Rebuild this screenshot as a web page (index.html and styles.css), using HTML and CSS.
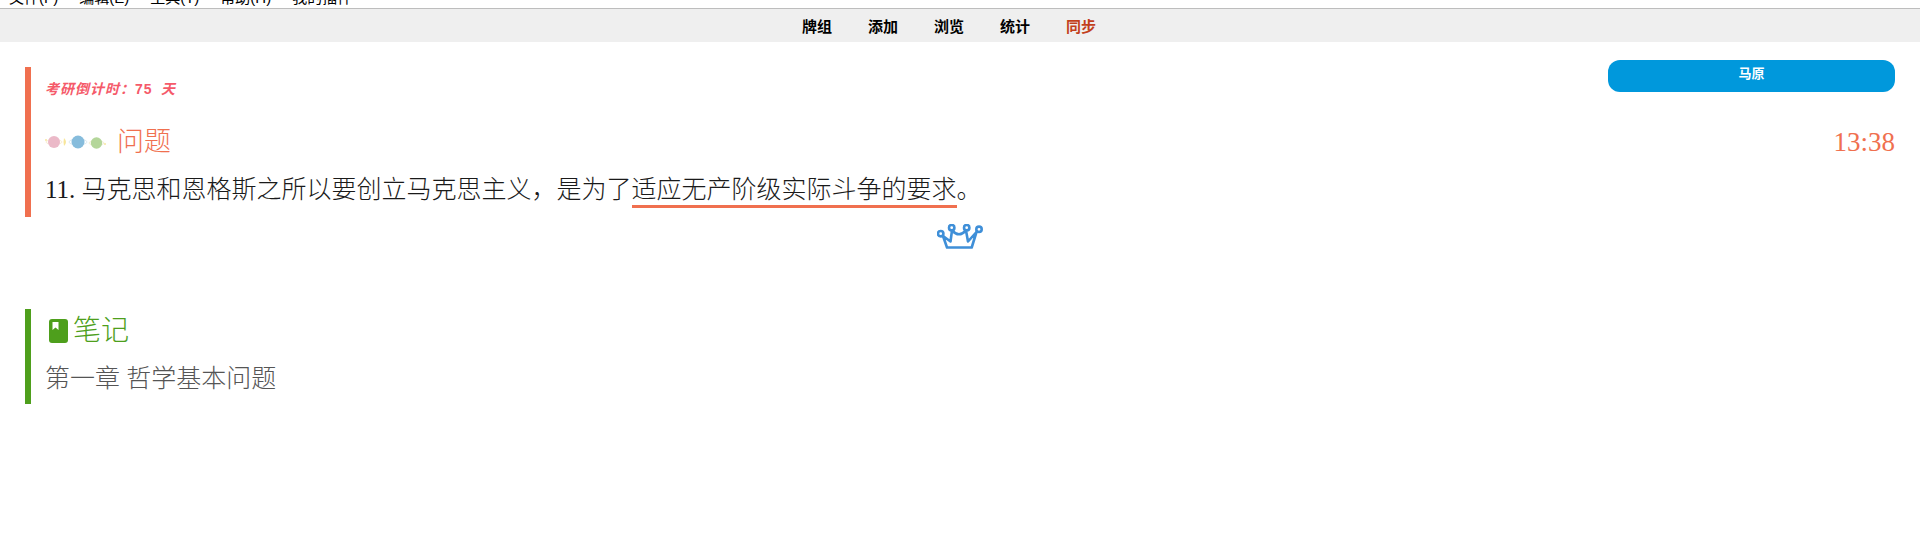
FILE: index.html
```html
<!DOCTYPE html>
<html>
<head>
    <title>同步</title>
    <link rel="stylesheet" href="styles.css">
</head>
<body>
    <div class="menubar">
        <div class="menu-items">
            <span>文件(F)</span>
            <span>编辑(E)</span>
            <span>工具(T)</span>
            <span>帮助(H)</span>
            <span>我的插件</span>
        </div>
    </div>

    <div class="toolbar">
        <a href="#">牌组</a>
        <a href="#">添加</a>
        <a href="#">浏览</a>
        <a href="#">统计</a>
        <a href="#" class="sync">同步</a>
    </div>

    <div class="card">
        <div class="section question">
            <div class="top-row">
                <div class="countdown">考研倒计时：<span class="days">75</span> 天</div>
                <div class="deck-pill">马原</div>
            </div>
            <div class="heading-row">
                <div class="heading">
                    <svg class="planets" width="62" height="20" viewBox="0 0 62 20">
                        <circle cx="1" cy="8" r="1" fill="#f7e6a0"/>
                        <ellipse cx="9" cy="10" rx="8" ry="2.4" fill="none" stroke="#f6e7c8" stroke-width="0.8"/>
                        <circle cx="9" cy="10" r="6" fill="#ebb9c8"/>
                        <path d="M19 6 Q23 10 19 14 Q18 10 19 6 Z" fill="#f8e69a"/>
                        <ellipse cx="33" cy="10" rx="9" ry="3" fill="none" stroke="#d5e6ee" stroke-width="0.8"/>
                        <circle cx="33" cy="10" r="6.5" fill="#86bcdc"/>
                        <ellipse cx="51.5" cy="11" rx="7.5" ry="2.2" fill="none" stroke="#eee8c8" stroke-width="0.8"/>
                        <circle cx="51.5" cy="11" r="5.7" fill="#b4d69a"/>
                        <circle cx="60" cy="12" r="1" fill="#f7e6a0"/>
                    </svg>
                    <span>问题</span>
                </div>
                <div class="clock">13:38</div>
            </div>
            <p class="question-text">11. 马克思和恩格斯之所以要创立马克思主义，是为了<span class="mark">适应无产阶级实际斗争的要求</span>。</p>
        </div>

        <div class="crown-row">
            <svg width="46" height="26" viewBox="0 0 46 26" fill="none" stroke="#3f8fd8" stroke-width="2.6">
                <circle cx="3.700" cy="9.700" r="2.700"/>
                <circle cx="14.700" cy="3.700" r="2.700"/>
                <circle cx="29.700" cy="3.700" r="2.700"/>
                <circle cx="42" cy="5.300" r="2.700"/>
                <path d="M6 12 L13.500 17.500 L15 6.500 Q22 14 29 6.500 L31 17.500 L39.500 8 L34.700 23.500 H10 L6 12" stroke-linejoin="round"/>
            </svg>
        </div>

        <div class="section note">
            <div class="heading">
                <svg class="book" width="19" height="24" viewBox="0 0 19 24">
                    <path d="M3 0 H16 Q19 0 19 3 V21 Q19 24 16 24 H3 Q0 24 0 21 V3 Q0 0 3 0 Z" fill="#4e9f1c"/>
                    <path d="M3.500 3 H9.500 V11 L6.500 8.500 L3.500 11 Z" fill="#fff"/>
                </svg>
                <span>笔记</span>
            </div>
            <p class="note-text">第一章 哲学基本问题</p>
        </div>
    </div>
</body>
</html>
```

FILE: styles.css
```css
body {
    margin: 0;
    background-color: #fff;
    color: #000;
    font-family: "Liberation Serif", "Noto Sans CJK SC", serif;
}

.menubar {
    height: 8px;
    overflow: hidden;
    background-color: #fff;
    border-bottom: 1px solid #bdbdbd;
}

.menu-items {
    display: flex;
    gap: 21px;
    margin-top: -12px;
    padding-left: 9px;
    font-family: "Liberation Sans", "Noto Sans CJK SC", sans-serif;
    font-size: 15px;
    line-height: 20px;
}

.toolbar {
    display: flex;
    justify-content: center;
    gap: 36px;
    height: 33px;
    align-items: center;
    padding-right: 22px;
    background-color: #efefef;
    font-family: "Liberation Sans", "Noto Sans CJK SC", sans-serif;
    font-size: 15px;
    font-weight: bold;
}

.toolbar a {
    color: #000;
    text-decoration: none;
}

.toolbar a.sync {
    color: #c2401c;
}

.card {
    padding: 25px 25px 0;
}

.section {
    padding-left: 14px;
    border-left: 6px solid #f0704f;
}

.question {
    height: 150px;
}

.top-row {
    display: flex;
    justify-content: space-between;
}

.countdown {
    margin-top: 11px;
    color: #f55a6a;
    font-size: 14px;
    font-weight: bold;
    font-style: italic;
    letter-spacing: 1px;
}

.days {
    font-family: "Liberation Sans", sans-serif;
    font-style: normal;
    margin-right: 4px;
}

.deck-pill {
    width: 287px;
    height: 32px;
    margin-top: -7px;
    border-radius: 12px;
    background-color: #0098dc;
    color: #fff;
    font-family: "Liberation Sans", "Noto Sans CJK SC", sans-serif;
    font-size: 13px;
    font-weight: bold;
    line-height: 28px;
    text-align: center;
}

.heading-row {
    display: flex;
    justify-content: space-between;
    align-items: center;
    margin-top: 26px;
}

.heading {
    display: flex;
    align-items: center;
    gap: 10px;
    color: #f0704f;
    font-size: 27px;
    font-weight: 300;
    line-height: 36px;
}

.clock {
    color: #f0704f;
    font-size: 27px;
}

.question-text {
    margin: 14px 0 0;
    color: #1a1a1a;
    font-size: 25px;
    font-weight: 300;
    line-height: 32px;
}

.mark {
    padding-bottom: 2px;
    border-bottom: 3px solid #f0704f;
}

.crown-row {
    display: flex;
    justify-content: center;
    height: 85px;
    padding-top: 7px;
}

.note {
    height: 95px;
    border-left-color: #4e9f1c;
}

.note .heading {
    gap: 5px;
    padding-top: 4px;
    color: #4e9f1c;
    font-size: 28px;
}

.book {
    margin-left: 4px;
}

.note-text {
    margin: 14px 0 0;
    color: #555;
    font-size: 25px;
    font-weight: 300;
    line-height: 32px;
}
```
